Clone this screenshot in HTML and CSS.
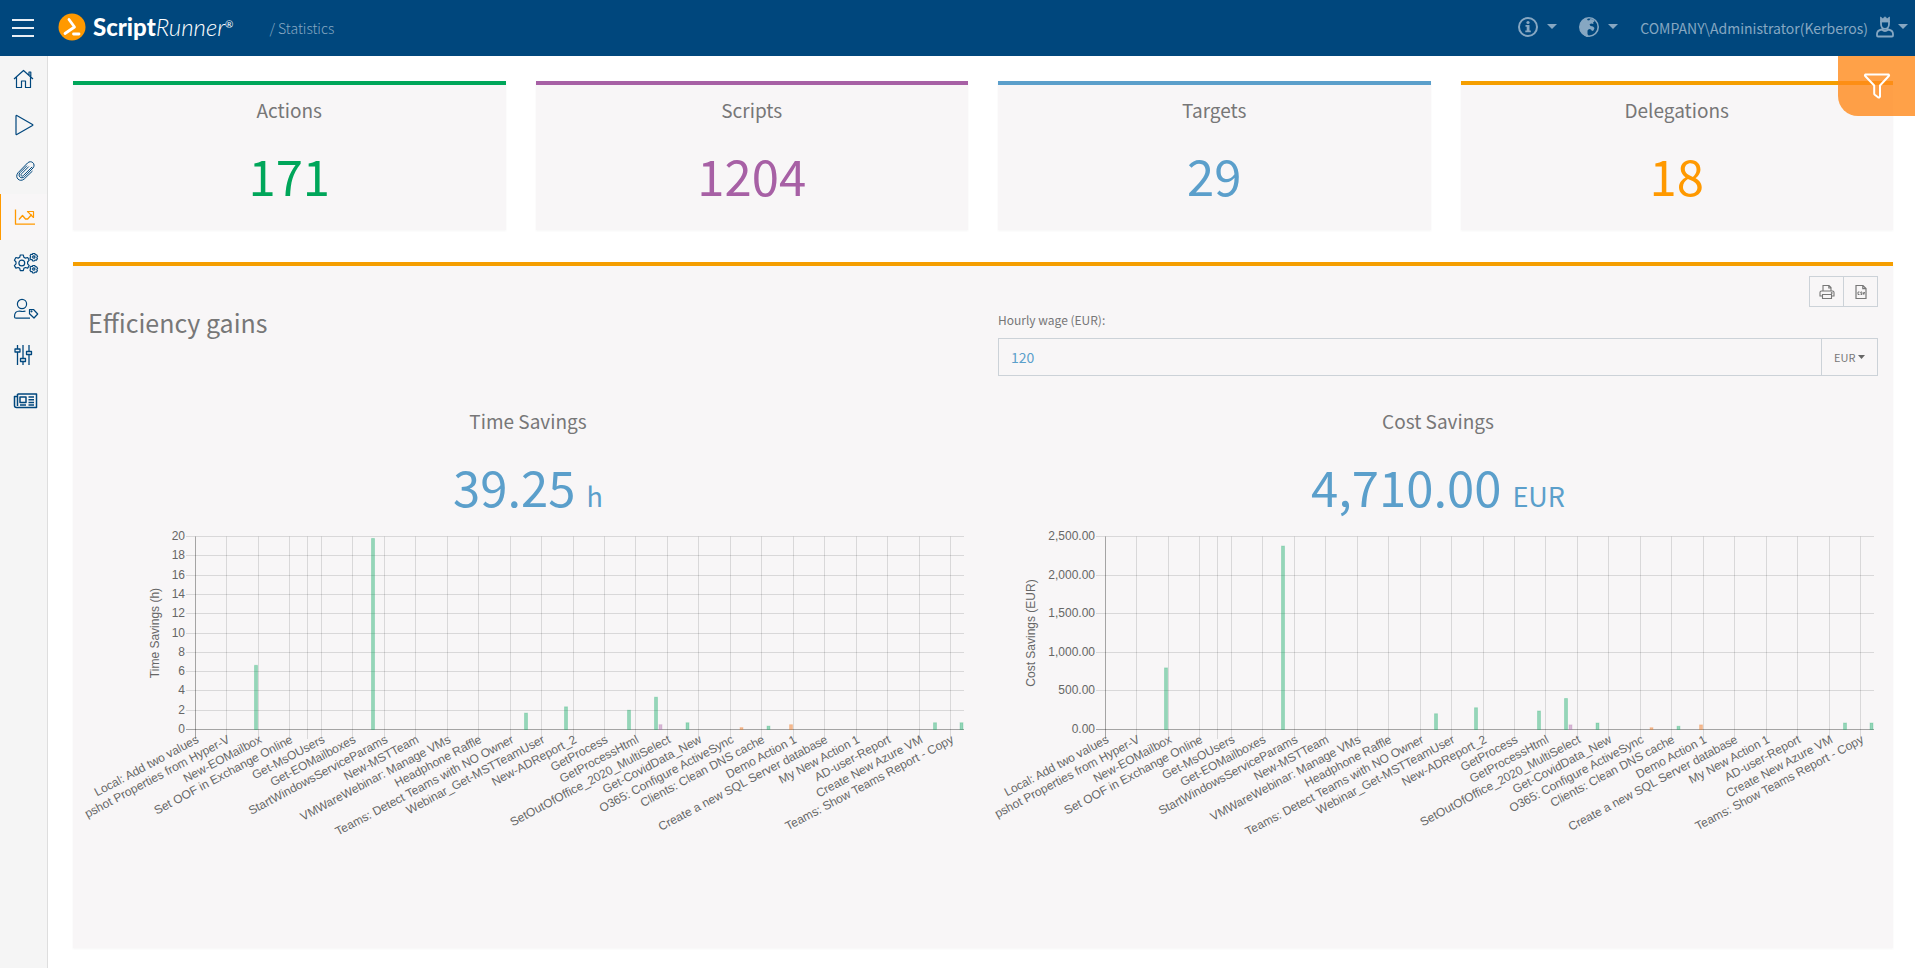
FILE: index.html
```html
<!DOCTYPE html>
<html lang="en">
<head>
<meta charset="utf-8">
<meta name="viewport" content="width=device-width, initial-scale=1">
<title>ScriptRunner - Statistics</title>
<link rel="stylesheet" href="styles.css">
</head>
<body>
<header class="topbar">
  <button class="icon-btn menu-btn" type="button" aria-label="Menu">
    <svg width="22" height="20" viewBox="0 0 22 20" stroke="#e8eef4" stroke-width="2"><path d="M0 2h22M0 10h22M0 18h22"/></svg>
  </button>
  <a class="logo" href="#">
    <svg width="28" height="28" viewBox="0 0 28 28" aria-hidden="true"><circle cx="14" cy="14" r="13.5" fill="#f90"/><path d="M11 6.5l5.5 7.5L7 20.500M15.500 21h5.500" fill="none" stroke="#fff" stroke-width="2.800" stroke-linecap="round" stroke-linejoin="round"/></svg>
    <span class="logo-text"><b>Script</b><i>Runner</i><sup>®</sup></span>
  </a>
  <nav class="crumbs" aria-label="Breadcrumb">/ Statistics</nav>
  <div class="topbar-tools">
    <button class="icon-btn" type="button" aria-label="Information">
      <svg class="tool-icon" width="20" height="20" viewBox="0 0 20 20"><circle cx="10" cy="10" r="9" fill="none" stroke="currentColor" stroke-width="2"/><circle cx="10" cy="5.500" r="1.600" fill="currentColor"/><path d="M7.500 8h4v5.500h1.300v1.800H7.300v-1.800h1.400V9.800H7.500z" fill="currentColor"/></svg>
      <svg class="caret" width="10" height="5" viewBox="0 0 10 5"><path d="M0 0h10L5 5z" fill="currentColor"/></svg>
    </button>
    <button class="icon-btn" type="button" aria-label="Language">
      <svg class="tool-icon" width="20" height="20" viewBox="0 0 20 20"><circle cx="10" cy="10" r="9.200" fill="none" stroke="currentColor" stroke-width="1.600"/><path d="M1 8.500C1.500 4 5 1 9 1l-1 2 2 .5 1.500-1.500 3 .5 1 2-1.500 1 .5 1.500-2.500-.5-1.500 1 1 1.500 2.500.5 1.500 1.500-1 2.500-1.500.5-1-1.500-2-.5-1.500 1.500v3.500l1 2-1 1.500C4 18 1 14 1 10z" fill="currentColor"/></svg>
      <svg class="caret" width="10" height="5" viewBox="0 0 10 5"><path d="M0 0h10L5 5z" fill="currentColor"/></svg>
    </button>
    <button class="icon-btn user-btn" type="button">
      <span>COMPANY\Administrator(Kerberos)</span>
      <svg class="user-icon" width="18" height="22" viewBox="0 0 18 22" fill="none" stroke="currentColor" stroke-width="1.800"><path d="M4.500 6V1l2.300 1.800L9 .800l2.200 2L13.500 1v5z" fill="currentColor" stroke-width=".8"/><path d="M5 5v3c0 2.600 1.500 4.800 4 4.800s4-2.200 4-4.800V5M5.800 13.500C3 14 1 15.500 1 18v1.500q0 1 1 1h14q1 0 1-1V18c0-2.500-2-4-4.800-4.500Q9 16.500 5.800 13.500z"/></svg>
      <svg class="caret" width="10" height="5" viewBox="0 0 10 5"><path d="M0 0h10L5 5z" fill="currentColor"/></svg>
    </button>
  </div>
</header>
<div class="shell">
  <nav class="sidebar" aria-label="Main">
    <a href="#" aria-label="Home"><svg width="26" height="22" viewBox="0 0 26 22"><path d="M1 11L10.500 2.500 20 11M3.500 9v10.500h5V13h4v6.500h5V9M16 7.500V4h1.800v5"/></svg></a>
    <a href="#" aria-label="Actions"><svg width="26" height="22" viewBox="0 0 26 22"><path d="M3 2v18q0 .8.800.4L19.500 11.600q.8-.6 0-1.200L3.800 1.600Q3 1.200 3 2z"/></svg></a>
    <a href="#" aria-label="Scripts"><svg width="26" height="22" viewBox="0 0 26 22"><path d="M15.800 6.500l-7.300 7.300c-1.300 1.500.3 3.200 1.800 1.800l8.800-8.700M19.500 11l-8.300 8c-4.500 3.800-10-1.500-6.200-6.200L14.500 3c3.700-3.500 8.800 1 5.500 5l-8.500 8.700c-3.500 3-7.200-.8-4.500-4l7-7" stroke-width="1"/></svg></a>
    <a class="active" href="#" aria-label="Statistics" aria-current="page"><svg width="26" height="22" viewBox="0 0 26 22"><path d="M2.500 3.500v14.700H22M6 13.500l3.500-4 3 3.500 2.200 0 4-4.500" stroke-width="1.300"/><path d="M14.500 5.500h6v6l-1.800-1.700-2.500-2.600z"/></svg></a>
    <a href="#" aria-label="Settings"><svg width="26" height="22" viewBox="0 0 26 22"><path d="M7.300 3h3l.6 2.300 1.500.8 2.300-.6 1.500 2.700L14.600 10v1.800l1.600 1.800-1.500 2.500-2.300-.6-1.500.8-.6 2.300h-3l-.6-2.300-1.500-.8-2.300.6-1.500-2.500L3 11.800V10L1.400 8.200l1.500-2.700 2.300.6 1.500-.8z"/><circle cx="8.800" cy="11" r="2.900"/><g><circle cx="20.800" cy="5" r="1.200"/><path d="M19.800 1.500h2l.5 1.200 1.300.1 1 1.700-.8 1 .6 1.200-1 1.500-1.400-.2-.8 1h-1.400l-.6-1.300-1.500-.1-.8-1.600.8-1-.6-1.200.8-1.500 1.500.2z"/><circle cx="20.800" cy="17" r="1.200"/><path d="M19.800 13.500h2l.5 1.200 1.300.1 1 1.700-.8 1 .6 1.200-1 1.500-1.400-.2-.8 1h-1.400l-.6-1.300-1.500-.1-.8-1.600.8-1-.6-1.200.8-1.500 1.500.2z"/></g></svg></a>
    <a href="#" aria-label="Delegations"><svg width="26" height="22" viewBox="0 0 26 22"><circle cx="9" cy="6" r="4.600"/><path d="M17 20.200H3q-1.500 0-1.500-1.500c0-3.500 2-5.700 5-5.700q3 1 6 0M16.500 11.500h4l4.200 4.500-3.700 4-4.500-4.300z"/><circle cx="18.500" cy="13.300" r=".5"/></svg></a>
    <a href="#" aria-label="Configuration"><svg width="26" height="22" viewBox="0 0 26 22"><path d="M4.500 1v4M4.500 8v13M10 1v13.500M10 17.500V21M16 1v6.500M16 10.500V21M2 5h5v3H2zM7.500 14.500h5v3h-5zM13.500 7.500h5v3h-5z" stroke-width="1.300"/></svg></a>
    <a href="#" aria-label="News"><svg width="26" height="22" viewBox="0 0 26 22"><path d="M4.500 4h19v13.500h-20q-2 0-2-2v-9h3M4.500 4v12M7 7h6v5.500H7zM7 15h6M15.500 7H21M15.500 9.700H21M15.500 12.400H21M15.500 15H21" stroke-width="1.500"/></svg></a>
  </nav>
  <main class="content">
    <section class="stats" aria-label="Totals">
      <article class="stat stat-green"><h2>Actions</h2><p>171</p></article>
      <article class="stat stat-purple"><h2>Scripts</h2><p>1204</p></article>
      <article class="stat stat-blue"><h2>Targets</h2><p>29</p></article>
      <article class="stat stat-orange"><h2>Delegations</h2><p>18</p></article>
    </section>
    <section class="panel">
      <div class="export">
        <button type="button" aria-label="Print"><svg width="16" height="16" viewBox="0 0 16 16" fill="none" stroke="#777" stroke-width="1.100"><path d="M4 7V1.500h6L12 3.500V7M9.800 1.500V4H12M3.500 12H1V8.500Q1 7 2.500 7h11Q15 7 15 8.500V12h-2.500M3.500 10.500h9v4h-9z"/><circle cx="12.700" cy="9" r=".4"/></svg></button>
        <button type="button" aria-label="Export CSV"><svg width="16" height="16" viewBox="0 0 16 16" fill="none" stroke="#777" stroke-width="1.200"><path d="M3 1.500h7l3 3v10H3zM9.800 1.500v3.200H13"/><path d="M6.500 8H5v2.500h1.500M9 8H7.800v1.200H9v1.300H7.600M10 8l.8 2.500.8-2.500" stroke-width="1"/></svg></button>
      </div>
      <div class="columns">
        <h1>Efficiency gains</h1>
        <div class="wage">
          <label for="wage">Hourly wage (EUR):</label>
          <div class="wage-field">
            <input id="wage" type="text" value="120">
            <div class="currency">
              <select aria-label="Currency"><option>EUR</option></select>
              <svg width="7" height="4" viewBox="0 0 7 4" aria-hidden="true"><path d="M0 0h7L3.500 4z" fill="#666"/></svg>
            </div>
          </div>
        </div>
      </div>
      <div class="columns savings">
        <article>
          <h2>Time Savings</h2>
          <p>39.25 <small>h</small></p>
          <svg class="chart" id="time-chart" viewBox="0 0 880 400" role="img" aria-label="Time savings per action"></svg>
        </article>
        <article>
          <h2>Cost Savings</h2>
          <p>4,710.00 <small>EUR</small></p>
          <svg class="chart" id="cost-chart" viewBox="0 0 880 400" role="img" aria-label="Cost savings per action"></svg>
        </article>
      </div>
    </section>
  </main>
  <button class="filter" type="button" aria-label="Filter"><svg width="28" height="28" viewBox="0 0 28 28" fill="none" stroke="#fff" stroke-width="2" stroke-linejoin="round"><path d="M2.200 2.500h23.600q.6.800 0 1.500L17 13.500v11q-.5 1.500-2 .8l-3.200-2.500q-.6-.5-.6-1.300v-8L2.200 4q-.6-.7 0-1.500z"/></svg></button>
</div>
<script src="charts.js"></script>
</body>
</html>
```

FILE: charts.js
```js
const LABELS = [
  "Local: Add two values", "pshot Properties from Hyper-V", "New-EOMailbox",
  "Set OOF in Exchange Online", "Get-MsOUsers", "Get-EOMailboxes",
  "StartWindowsServiceParams", "New-MSTTeam", "VMWareWebinar: Manage VMs",
  "Headphone Raffle", "Teams: Detect Teams with NO Owner", "Webinar_Get-MSTTeamUser",
  "New-ADReport_2", "GetProcess", "GetProcessHtml", "SetOutOfOffice_2020_MultiSelect",
  "Get-CovidData_New", "O365: Configure ActiveSync", "Clients: Clean DNS cache",
  "Demo Action 1", "Create a new SQL Server database", "My New Action 1",
  "AD-user-Report", "Create New Azure VM", "Teams: Show Teams Report - Copy"
];

// Bar position along the axis, hours saved, series
const BARS = [
  [168, 6.65, "green"], [285, 19.8, "green"], [438, 1.7, "green"],
  [478, 2.35, "green"], [541, 2, "green"], [568, 3.35, "green"],
  [572.5, 0.5, "purple"], [599.5, 0.7, "green"], [653.5, 0.2, "orange"],
  [680.5, 0.35, "green"], [703, 0.5, "orange"], [847, 0.7, "green"],
  [873.5, 0.7, "green"]
];

const PLOT = { left: 107.5, right: 876, top: 6.5, bottom: 199.5, step: 31.46 };

function node(parent, name, attrs, text) {
  const el = document.createElementNS("http://www.w3.org/2000/svg", name);
  for (const key in attrs) el.setAttribute(key, attrs[key]);
  if (text) el.textContent = text;
  parent.appendChild(el);
}

function snap(v) {
  return Math.floor(v) + 0.5;
}

function drawChart(id, opts) {
  const svg = document.getElementById(id);
  const height = PLOT.bottom - PLOT.top;

  for (let i = 0; i <= opts.ticks; i++) {
    const y = snap(PLOT.bottom - (height * i) / opts.ticks);
    node(svg, "path", { d: `M98 ${y}H${PLOT.right}`, class: i ? "grid" : "axis" });
    node(svg, "text", { x: 97, y: y + 3.5, class: "tick" }, opts.format(i * opts.tickStep));
  }

  LABELS.forEach((label, i) => {
    const x = snap(PLOT.left + i * PLOT.step);
    node(svg, "path", { d: `M${x} ${PLOT.top}V209`, class: i ? "grid" : "axis" });
    node(svg, "text", { transform: `translate(${x + 4} 212) rotate(-28)`, class: "tick" }, label);
  });
  node(svg, "path", { d: `M219.5 ${PLOT.top}V209`, class: "grid" });

  BARS.forEach(([x, hours, series]) => {
    const h = (height * hours * opts.factor) / (opts.ticks * opts.tickStep);
    node(svg, "rect", { x: x - 1.5, y: PLOT.bottom - h, width: 3, height: h, class: "bar " + series });
  });

  node(svg, "text", {
    transform: `translate(${opts.titleX} 103) rotate(-90)`, class: "axis-title"
  }, opts.title);
}

drawChart("time-chart", {
  ticks: 10, tickStep: 2, factor: 1, title: "Time Savings (h)", titleX: 71,
  format: v => String(v)
});
drawChart("cost-chart", {
  ticks: 5, tickStep: 500, factor: 120, title: "Cost Savings (EUR)", titleX: 37,
  format: v => v.toLocaleString("en-US", { minimumFractionDigits: 2 })
});
```

FILE: styles.css
```css
* { box-sizing: border-box; }

body {
  margin: 0;
  min-height: 100vh;
  display: flex;
  flex-direction: column;
  background: #fff;
  color: #777;
  font-family: "Noto Sans CJK JP", "Noto Sans", sans-serif;
}

h1, h2, p { margin: 0; font-weight: 400; }

button {
  padding: 0;
  border: 0;
  background: none;
  color: inherit;
  font: inherit;
  cursor: pointer;
}

svg { display: block; }

/* Top bar */
.topbar {
  display: flex;
  align-items: center;
  height: 56px;
  padding: 0 7px 0 12px;
  background: #00477d;
  color: #86a7c2;
  font-size: 14px;
}

.icon-btn { display: flex; align-items: center; gap: 9px; }

.logo {
  display: flex;
  align-items: center;
  gap: 7px;
  margin-left: 24px;
  padding-bottom: 2px;
  color: #fff;
  text-decoration: none;
}

.logo-text { font: 24px/28px Lato, sans-serif; }
.logo-text b { font-weight: 900; }
.logo-text i { font-weight: 300; }
.logo-text sup { font-size: 10px; line-height: 10px; vertical-align: 8px; }

.crumbs { margin-left: 36px; font-weight: 300; }

.topbar-tools {
  display: flex;
  align-items: center;
  gap: 22px;
  margin-left: auto;
}

.tool-icon, .topbar .caret { margin-bottom: 3px; }
.user-btn { gap: 4px; }
.user-icon { margin: 0 0 3px 4px; }

/* Sidebar */
.shell { position: relative; display: flex; flex: 1; }

.sidebar {
  flex: none;
  width: 48px;
  background: #f5f5f5;
  border-right: 1px solid #dedede;
}

.sidebar a {
  display: flex;
  align-items: center;
  height: 46px;
  padding: 0 0 1px 12px;
  border-left: 1px solid transparent;
  color: #00477d;
}

.sidebar a.active { border-color: #f90; background: #f8f6f7; color: #f90; }
.sidebar svg { fill: none; stroke: currentColor; stroke-width: 1.2px; stroke-linejoin: round; }

/* Content */
.content { flex: 1; min-width: 0; padding: 25px 22px 20px 25px; }

.stats {
  display: grid;
  grid-template-columns: repeat(4, 1fr);
  gap: 30px;
  margin-bottom: 32px;
}

.stat, .panel {
  border-top: 4px solid #f59e00;
  background: #f8f6f7;
  box-shadow: 0 1px 2px #0000000a;
}

.stat { padding: 11px 15px 27px; text-align: center; }
.stat h2, .savings h2 { margin-bottom: 23px; font-size: 19px; line-height: 28px; }
.stat p, .savings p { font-size: 49px; line-height: 56px; }
.savings small { font-size: 27px; line-height: 28px; }

.stat-green { border-color: #00a65a; }
.stat-green p { color: #00a65a; }
.stat-purple { border-color: #a760a5; }
.stat-purple p { color: #a760a5; }
.stat-blue { border-color: #5b9fcb; }
.stat-blue p { color: #5b9fcb; }
.stat-orange p { color: #f90; }

.panel { padding: 10px 15px 18px; }

.export { display: flex; justify-content: flex-end; }
.export button {
  display: grid;
  place-items: center;
  width: 35px;
  height: 31px;
  border: 1px solid #ccd2d8;
}
.export button + button { border-left: 0; width: 34px; }

.columns { display: grid; grid-template-columns: 1fr 1fr; gap: 30px; }
.columns h1 { font-size: 25px; line-height: 30px; }

.wage label {
  display: block;
  margin: 3px 0 8px;
  font-size: 12px;
  line-height: 20px;
}

.wage-field { display: flex; height: 38px; border: 1px solid #ccd2d8; }
.wage-field input {
  flex: 1;
  min-width: 0;
  padding: 0 12px;
  border: 0;
  background: none;
  color: #5b9fcb;
  font: 14px "Noto Sans CJK JP", sans-serif;
}

.currency {
  display: grid;
  align-items: center;
  width: 56px;
  border-left: 1px solid #ccd2d8;
}
.currency > * { grid-area: 1 / 1; }
.currency select {
  height: 100%;
  padding: 0 12px;
  border: 0;
  appearance: none;
  background: none;
  color: #777;
  font: 11px "Noto Sans CJK JP", sans-serif;
}
.currency svg { justify-self: end; margin-right: 12px; pointer-events: none; }

/* Savings charts */
.savings { margin-top: 31px; text-align: center; }
.savings p { margin-bottom: 16px; color: #5b9fcb; }

.chart {
  width: 100%;
  height: auto;
  overflow: visible;
  font-family: "Liberation Sans", Arial, sans-serif;
  font-size: 12px;
}
.chart text { fill: #666; }
.tick { text-anchor: end; }
.axis-title { text-anchor: middle; }
.grid { stroke: #0000001f; }
.axis { stroke: #00000055; }
.bar { stroke-width: 1px; }
.green { fill: #00a65a66; stroke: #00a65a33; }
.purple { fill: #a760a566; stroke: #a760a533; }
.orange { fill: #f0741a77; stroke: #f0741a33; }

/* Filter flyout handle */
.filter {
  position: absolute;
  top: 0;
  right: 0;
  display: grid;
  place-items: center;
  width: 77px;
  height: 60px;
  border-radius: 0 0 0 20px;
  background: #ff8a1acc;
}
```
